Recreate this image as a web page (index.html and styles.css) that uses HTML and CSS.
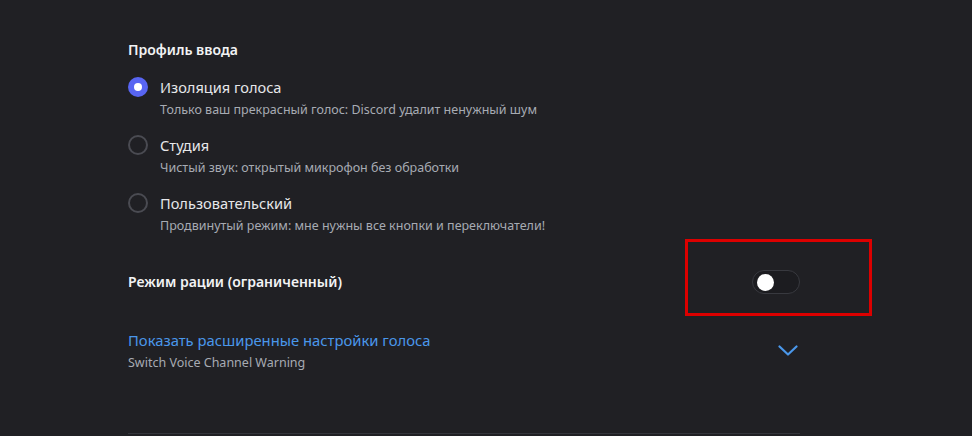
FILE: index.html
```html
<!DOCTYPE html>
<html lang="ru">
<head>
<meta charset="utf-8">
<title>Голос</title>
<link rel="stylesheet" href="styles.css">
</head>
<body>
<main class="page">
  <h2 class="section-title">Профиль ввода</h2>
  <div class="radio-group">
    <div class="option">
      <span class="radio radio-checked"></span>
      <div class="option-text">
        <div class="option-label">Изоляция голоса</div>
        <div class="option-desc">Только ваш прекрасный голос: Discord удалит ненужный шум</div>
      </div>
    </div>
    <div class="option">
      <span class="radio"></span>
      <div class="option-text">
        <div class="option-label">Студия</div>
        <div class="option-desc">Чистый звук: открытый микрофон без обработки</div>
      </div>
    </div>
    <div class="option">
      <span class="radio"></span>
      <div class="option-text">
        <div class="option-label">Пользовательский</div>
        <div class="option-desc">Продвинутый режим: мне нужны все кнопки и переключатели!</div>
      </div>
    </div>
  </div>

  <div class="switch-row">
    <span class="switch-label">Режим рации (ограниченный)</span>
    <span class="toggle"><span class="knob"></span></span>
    <span class="highlight"></span>
  </div>

  <div class="advanced-row">
    <div class="advanced-text">
      <div class="advanced-link">Показать расширенные настройки голоса</div>
      <div class="advanced-sub">Switch Voice Channel Warning</div>
    </div>
    <svg class="chevron" width="20" height="12" viewBox="0 0 20 12" aria-hidden="true">
      <path d="M1.5 1.5 L10 9.5 L18.5 1.5" fill="none" stroke="#4a97ea" stroke-width="2.2" stroke-linecap="round" stroke-linejoin="round"/>
    </svg>
  </div>

  <div class="divider"></div>
</main>
</body>
</html>
```

FILE: styles.css
```css
html, body {
  margin: 0;
  padding: 0;
  background: #202024;
  height: 100%;
  overflow: hidden;
}

body {
  font-family: "Noto Sans", "Open Sans", sans-serif;
  color: #dbdee1;
}

.page {
  width: 672px;
  margin-left: 128px;
  padding-top: 40px;
}

.section-title {
  margin: 0;
  font-size: 14px;
  line-height: 20px;
  font-weight: 600;
  color: #f2f3f5;
}

.radio-group {
  margin-top: 17px;
  display: flex;
  flex-direction: column;
}

.option {
  display: flex;
  gap: 12px;
  height: 58px;
}

.radio {
  box-sizing: border-box;
  width: 20px;
  height: 20px;
  border-radius: 50%;
  border: 2px solid #4a4b52;
  flex: none;
}

.radio-checked {
  border: none;
  background: #5865f2;
  display: flex;
  align-items: center;
  justify-content: center;
}

.radio-checked::after {
  content: "";
  width: 8px;
  height: 8px;
  border-radius: 50%;
  background: #ffffff;
}

.option-label {
  font-size: 14.6px;
  line-height: 20px;
  font-weight: 400;
  color: #e6e7ea;
}

.option-desc {
  margin-top: 5px;
  font-size: 12.5px;
  line-height: 16px;
  color: #a7abb3;
}

.switch-row {
  position: relative;
  margin-top: 19px;
  height: 24px;
  display: flex;
  align-items: center;
  justify-content: space-between;
}

.switch-label {
  font-size: 14px;
  line-height: 20px;
  font-weight: 600;
  color: #f2f3f5;
}

.toggle {
  box-sizing: border-box;
  width: 48px;
  height: 24px;
  border-radius: 12px;
  border: 1px solid #38393f;
  background: #1c1c20;
  display: flex;
  align-items: center;
  padding-left: 4px;
}

.knob {
  width: 17px;
  height: 17px;
  border-radius: 50%;
  background: #ffffff;
}

.highlight {
  position: absolute;
  left: 557px;
  top: -31px;
  width: 187px;
  height: 77px;
  box-sizing: border-box;
  border: 3px solid #dc0000;
}

.advanced-row {
  margin-top: 36px;
  display: flex;
  justify-content: space-between;
  align-items: flex-start;
}

.advanced-link {
  font-size: 14.8px;
  line-height: 20px;
  color: #4a97ea;
}

.advanced-sub {
  margin-top: 5px;
  font-size: 12.5px;
  line-height: 16px;
  color: #a7abb3;
}

.chevron {
  margin-top: 15px;
  margin-right: 2px;
}

.divider {
  margin-top: 62px;
  height: 1px;
  background: #34353b;
}
```
